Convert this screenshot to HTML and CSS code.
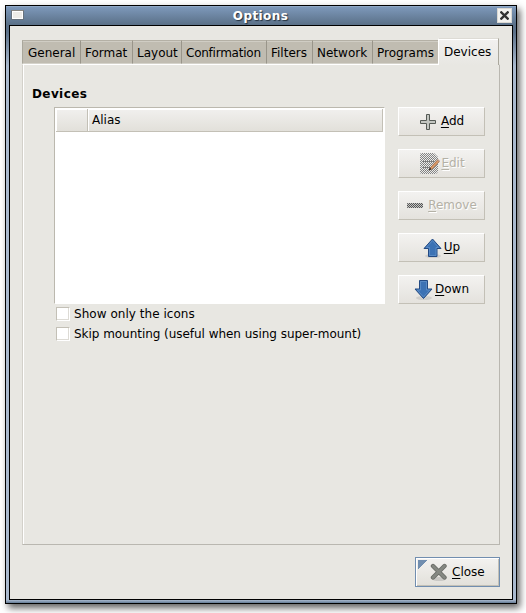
FILE: index.html
```html
<!DOCTYPE html>
<html lang="en">
<head>
<meta charset="utf-8">
<title>Options</title>
<link rel="stylesheet" href="styles.css">
</head>
<body>
<div class="window">
  <header class="titlebar">
    <span class="window-menu"></span>
    <h1>Options</h1>
    <button class="window-close" aria-label="Close window"><svg width="9" height="9" viewBox="0 0 9 9"><path d="M.5 .5L8.500 8.500M8.500 .5L.5 8.500" stroke="#333" stroke-width="2.300"/></svg></button>
  </header>
  <main class="content">
    <nav class="tabs">
      <span class="tab general">General</span><span class="tab format">Format</span><span class="tab layout">Layout</span><span class="tab confirmation">Confirmation</span><span class="tab filters">Filters</span><span class="tab network">Network</span><span class="tab programs">Programs</span><span class="tab active">Devices</span>
    </nav>
    <section class="panel">
      <h2>Devices</h2>
      <div class="devices">
        <div class="left">
          <div class="list">
            <div class="list-head"><span class="col icon-col"></span><span class="col alias-col">Alias</span></div>
          </div>
          <label class="check"><span class="box"></span><span class="check-one">Show only the icons</span></label>
          <label class="check"><span class="box"></span><span class="check-two">Skip mounting (useful when using super-mount)</span></label>
        </div>
        <div class="actions">
          <button class="btn add"><svg width="16" height="16" viewBox="0 0 16 16"><path d="M6.500 .5h3v6h6v3h-6v6h-3v-6h-6v-3h6z" fill="#c3c6c1" stroke="#555a55"/></svg><span><u>A</u>dd</span></button>
          <button class="btn disabled edit"><svg class="i-edit" width="22" height="24" viewBox="0 0 22 24">
            <defs>
              <pattern id="dither" width="2" height="2" patternUnits="userSpaceOnUse"><path d="M0 0h1v1H0zM1 1h1v1H1z" fill="#858585" shape-rendering="crispEdges"/></pattern>
            </defs>
            <path d="M2 1h13l4 4v15l-2 2H2l-1-1V2z" fill="#ececea"/>
            <path d="M2 1h13l4 4v15l-2 2H2l-1-1V2z" fill="url(#dither)"/>
            <path d="M4 6.500h11M4 9.500h11M4 12.500h9M4 15.500h7M4 18.500h6" stroke="#777" stroke-dasharray="1 1"/>
            <path d="M11 16L18.500 8l1.800 1.600L13 17l-2.500 1z" fill="#dc9a68" stroke="#92603f" stroke-width=".7"/><path d="M9.500 18.500l1.500-2.700 1.500 1.500z" fill="#222"/><path d="M18.500 7.500l2 2" stroke="#b98" stroke-width="1.500"/>
          </svg><span><u>E</u>dit</span></button>
          <button class="btn disabled remove"><svg width="16" height="5" viewBox="0 0 16 5">
            <defs><pattern id="dark-dither" width="2" height="2" patternUnits="userSpaceOnUse"><path d="M0 0h1v1H0zM1 1h1v1H1z" fill="#555" shape-rendering="crispEdges"/></pattern></defs>
            <rect width="16" height="5" rx="1" fill="#c4c4c2"/><rect width="16" height="5" rx="1" fill="url(#dark-dither)"/></svg><span><u>R</u>emove</span></button>
          <button class="btn"><svg class="i-arrow" width="20" height="20" viewBox="0 0 20 20"><ellipse cx="10" cy="18" rx="8" ry="2" fill="#777" opacity=".2"/><path d="M9.500 1L18 10.500H14V18.500H5.500V10.500H1z" fill="#3c72b4" stroke="#234a83"/><path d="M9.500 2.600L15.500 9.500H13V17.500H6.500V9.500H3.300z" fill="none" stroke="#6c9bd0" stroke-width=".6"/></svg><span><u>U</u>p</span></button>
          <button class="btn"><svg class="i-arrow" width="20" height="20" viewBox="0 0 20 20"><ellipse cx="10" cy="18" rx="8" ry="2" fill="#777" opacity=".2"/><path d="M5.500 .5H13.500V9H18L9.500 18.500L1 9H5.500z" fill="#3c72b4" stroke="#234a83"/><path d="M6.500 1.500H12.500V10H15.700L9.500 17L3.300 10H6.500z" fill="none" stroke="#6c9bd0" stroke-width=".6"/></svg><span><u>D</u>own</span></button>
        </div>
      </div>
    </section>
    <footer class="footer">
      <button class="close"><svg width="18" height="18" viewBox="0 0 18 18"><ellipse cx="9" cy="16" rx="7" ry="2" fill="#777" opacity=".25"/><path d="M3 3L14.500 14.500M14.500 3L3 14.500" stroke="#6a6c67" stroke-width="4.400" stroke-linecap="round"/><path d="M3 3L14.500 14.500M14.500 3L3 14.500" stroke="#858882" stroke-width="2.600" stroke-linecap="round"/></svg><span><u>C</u>lose</span></button>
    </footer>
  </main>
</div>
</body>
</html>
```
FILE: styles.css
```css
* { box-sizing: border-box; }
body { margin: 0; height: 613px; padding: 5px; overflow: hidden; background: #fff; font: 12px/16px "DejaVu Sans", sans-serif; color: #000; }
h1, h2 { margin: 0; font-weight: bold; }
span { white-space: nowrap; }
button { font: inherit; color: inherit; padding: 0; margin: 0; border: 0; }
svg { display: block; flex: none; }
u { text-decoration: underline; text-underline-offset: 2px; text-decoration-thickness: 1px; text-decoration-skip-ink: none; }

.window { width: 512px; height: 599px; border: 1px solid #000; padding: 0 3px 3px; background: linear-gradient(#7f9aba 0, #5b7088 20px, #5b7088 26px, #a9b9ce 60px, #a9b9ce 594px, #647b95 597px); box-shadow: 3px 4px 7px rgba(0,0,0,.62); }
.titlebar { height: 19px; margin: 0 -3px; padding: 0 3px; display: grid; grid-template-columns: 20px 1fr 20px; align-items: center; background: linear-gradient(#a4b9d2 0, #7d98ba 1px, #5a7087 19px); }
.titlebar h1 { color: #fff; text-align: center; font-size: 12px; letter-spacing: .4px; line-height: 18px; padding: 1px 1px 0 0; text-shadow: 1px 1px 1px #25313e; }
.window-menu { width: 13px; height: 10px; margin: -1px 0 0 2px; border: 1px solid #68737e; border-top-color: #8a8782; background: #eeece8; box-shadow: inset 0 0 0 1px #fff; }
.window-close { justify-self: end; margin-right: 1px; width: 15px; height: 15px; background: #f3f2ef; border: 1px solid #dad8d2; display: grid; place-items: center; }

.content { height: 575px; border: 1px solid #000; background: #e8e7e2; padding: 12px 12px 0; }
.tabs { height: 26px; display: flex; align-items: flex-end; }
.tab { height: 24px; border-top: 1px solid #b4b0a5; border-right: 1px solid #99958a; border-bottom: 1px solid #d5d3cb; background: #c0bcb1; box-shadow: inset 0 1px #d0cdc4; line-height: 24px; }
.general { width: 59px; padding-left: 5px; border-left: 1px solid #aaa79c; }
.format { width: 52px; padding-left: 4px; }
.layout { width: 49px; padding-left: 4px; }
.confirmation { width: 85px; padding-left: 4px; letter-spacing: -.24px; }
.filters { width: 46px; padding-left: 4px; }
.network { width: 60px; padding-left: 4px; }
.programs { width: 65px; padding-left: 4px; border-right: 0; }
.tab.active { width: 61px; height: 27px; margin-bottom: -1px; padding-left: 5px; border: 1px solid #fff; border-top-color: #dddbd5; border-right-color: #aaa79c; border-bottom: 0; background: linear-gradient(#f2f1ef, #e8e7e2); box-shadow: inset 0 1px #fff; line-height: 26px; z-index: 1; }

.panel { width: 478px; height: 481px; border: 1px solid #fff; border-left-color: #d3d1ca; border-right-color: #b9b7b0; border-bottom-color: #b9b7b0; box-shadow: inset 1px 0 #fff; padding: 21px 0 0 9px; }
.panel h2 { font-size: 12px; line-height: 16px; letter-spacing: .4px; }
.devices { display: flex; gap: 13px; padding: 5px 0 0 22px; }
.left { width: 331px; }
.list { height: 197px; border: 1px solid #bbb8ae; border-right-color: #fff; border-bottom-color: #fff; background: #fff; padding: 1px; }
.list-head { display: flex; height: 23px; }
.col { border-right: 1px solid #c3c0b6; border-bottom: 1px solid #c3c0b6; background: linear-gradient(#f1f0ee, #e2e0da); box-shadow: inset 1px 1px #fff; line-height: 22px; }
.icon-col { width: 32px; }
.alias-col { flex: 1; padding-left: 4px; }
.check { display: flex; align-items: center; gap: 4px; height: 20px; padding-left: 2px; }
.check-one { letter-spacing: .04px; }
.check-two { letter-spacing: -.04px; }
.box { width: 14px; height: 14px; border: 1px solid #c3c0b6; border-right-color: #fff; border-bottom-color: #fff; background: #fff; box-shadow: inset -1px -1px #dddbd5; }
.actions { display: grid; gap: 13px; align-content: start; }
.btn { width: 87px; height: 29px; border: 1px solid #fff; border-right-color: #c3c0b6; border-bottom-color: #c3c0b6; background: linear-gradient(#f3f2f0, #e4e2dd); display: flex; align-items: center; justify-content: center; gap: 4px; line-height: 16px; }
.btn span { margin-top: -1px; }
.add { gap: 5px; padding-left: 1px; }
.edit { padding-left: 1px; }
.remove { gap: 5px; padding-left: 1px; }
.disabled { color: #b4b1a6; text-shadow: 1px 1px #fff; }
.i-arrow { margin-right: -3px; }
.i-edit { margin-right: -4px; }

.footer { display: flex; justify-content: flex-end; padding: 12px 0 0; }
.close { width: 85px; height: 30px; display: flex; align-items: center; gap: 4px; padding-left: 14px; border: 1px solid #718eaf; background: linear-gradient(135deg, #718eaf 0 6.4px, transparent 6.4px) 2px 2px / 10px 10px no-repeat, linear-gradient(#f3f2f0, #e2e0da); box-shadow: inset 1px 1px #fff, inset -1px -1px #c3c0b6; }
```
